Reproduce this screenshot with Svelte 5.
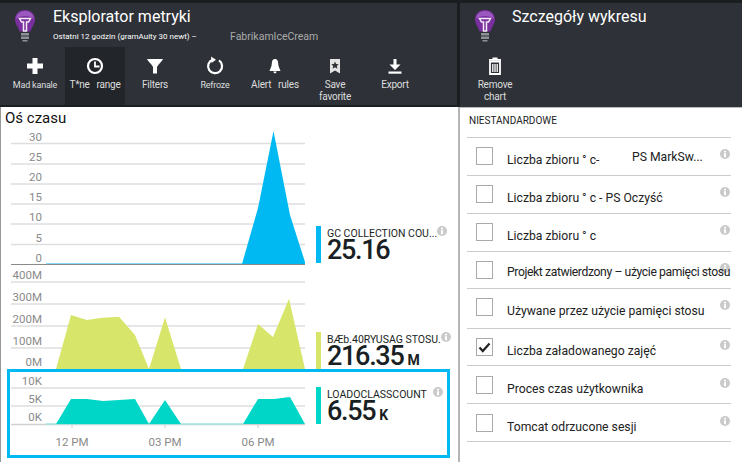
<script>
	const tools = [
		{ id: 'plus', label: 'Mad kanale', tight: true },
		{ id: 'clock', label: 'T*ne   range', active: true },
		{ id: 'filter', label: 'Filters' },
		{ id: 'refresh', label: 'Refroze', tight: true },
		{ id: 'bell', label: 'Alert   rules' },
		{ id: 'bookmark', label: 'Save\nfavorite' },
		{ id: 'export', label: 'Export' }
	];

	const charts = [
		{
			height: 135,
			bottom: 2,
			color: '#00b9f2',
			grid: [{ y: 13.500, t: '30' }, { y: 34, t: '25' }, { y: 54, t: '20' }, { y: 74, t: '15' }, { y: 94, t: '10' }, { y: 114.500, t: '5' }],
			zero: { y: 135, t: '0' },
			points: '242,134 258,78 273.5,1 290,85 305,132 305,134',
			thin: [46, 242, 134],
			name: 'GC COLLECTION COU...',
			value: '25.16',
			unit: ''
		},
		{
			height: 104,
			bottom: 0,
			color: '#d7e66b',
			grid: [{ y: 17, t: '400M' }, { y: 39, t: '300M' }, { y: 61, t: '200M' }, { y: 83, t: '100M' }],
			zero: { y: 104, t: '0M' },
			points: '56,104 71,50 87,55 100,53 119,51.7 135,70 149,104 165,52.3 181,104 243,104 258,59 273,72 289,33.7 305,104',
			name: 'BÆb.40RYUSAG STOSU.',
			value: '216.35',
			unit: 'M'
		}
	];

	const rows = [
		{ a: 'Liczba zbioru ° c-', b: 'PS MarkSw...', h: 38, top: 9 },
		{ a: 'Liczba zbioru ° c - PS Oczyść', h: 38, top: 9 },
		{ a: 'Liczba zbioru ° c', h: 38, top: 9 },
		{ a: 'Projekt zatwierdzony – użycie pamięci stosu', h: 37, top: 9, narrow: true },
		{ a: 'Używane przez użycie pamięci stosu', h: 40, top: 9 },
		{ a: 'Liczba załadowanego zajęć', h: 37, top: 9, checked: true },
		{ a: 'Proces czas użytkownika', h: 38, top: 10 },
		{ a: 'Tomcat odrzucone sesji', h: 38, top: 10 }
	];
</script>

{#snippet bulb()}
	<svg class="bulb" width="22" height="32" viewBox="0 0 22 32">
		<path d="M11 0C5 0 1 4 1 9.500C1 14 4 16 5.500 21.500H16.500C18 16 21 14 21 9.500C21 4 17 0 11 0Z" fill="#7a2f9e" />
		<path d="M11 1C6 1 2.500 4 2 9C5 5 17 5 20 9C19.500 4 16 1 11 1Z" fill="#9b59c0" />
		<path d="M5.500 8.500H16.500L14.500 12H12.500V21H9.500V12H7.500Z" fill="none" stroke="#f2eaf6" stroke-width="1.500" />
		<rect x="7" y="23" width="8" height="2.500" fill="#8d9094" />
		<rect x="7" y="26.500" width="8" height="2.500" fill="#8d9094" />
		<rect x="8.500" y="30" width="5" height="1.500" fill="#8d9094" />
	</svg>
{/snippet}

{#snippet icon(id)}
	<svg width="20" height="20" viewBox="0 0 20 20">
		{#if id === 'plus'}
			<path d="M7.500 2h5v5.500h5.500v5h-5.500v5.500h-5v-5.500h-5.500v-5h5.500z" fill="#fff" />
		{:else if id === 'clock'}
			<circle cx="10" cy="10" r="7" fill="none" stroke="#fff" stroke-width="2.200" />
			<path d="M10 5.500V10.500H14.500" fill="none" stroke="#fff" stroke-width="1.800" />
		{:else if id === 'filter'}
			<path d="M2 3H18C17 6 13 8 12 11V17.500H8V11C7 8 3 6 2 3Z" fill="#fff" />
		{:else if id === 'refresh'}
			<path d="M7.500 3.700A7 7 0 1 0 14 4.400" fill="none" stroke="#fff" stroke-width="2.200" />
			<path d="M6 0.500L11 3.700L6.500 7Z" fill="#fff" />
		{:else if id === 'bell'}
			<path d="M10 3C12.200 3 13.200 5 13.200 7.500C13.200 11 15 13 15.500 15H4.500C5 13 6.800 11 6.800 7.500C6.800 5 7.800 3 10 3Z" fill="#fff" />
			<path d="M8.500 15.500H11.500C11.500 16.800 10.800 17.300 10 17.300S8.500 16.800 8.500 15.500Z" fill="#fff" />
		{:else if id === 'bookmark'}
			<path d="M5 3H15V17.500L10 14.500L5 17.500Z" fill="#e4e4e4" />
			<path d="M10 5.500L11.100 8L13.800 8.300L11.800 10L12.400 12.700L10 11.300L7.600 12.700L8.200 10L6.200 8.300L8.900 8Z" fill="#2e3238" />
		{:else if id === 'export'}
			<path d="M8.500 3H11.500V8.500H15.500L10 14L4.500 8.500H8.500Z" fill="#fff" />
			<rect x="3.500" y="15.500" width="13" height="2.200" fill="#fff" />
		{:else if id === 'trash'}
			<path d="M5 5.500H15V18H5Z" fill="none" stroke="#fff" stroke-width="1.800" />
			<path d="M7.800 8V16M10 8V16M12.200 8V16" stroke="#fff" stroke-width="1.300" />
			<path d="M4 3H16V4.800H4ZM7.500 1.500H12.500V3H7.500Z" fill="#fff" />
		{/if}
	</svg>
{/snippet}

{#snippet info()}
	<svg class="info" width="10" height="10" viewBox="0 0 10 10">
		<circle cx="5" cy="5" r="5" fill="#cacaca" />
		<rect x="4" y="4.200" width="2" height="4" fill="#fff" />
		<rect x="4" y="1.800" width="2" height="1.600" fill="#fff" />
	</svg>
{/snippet}

{#snippet legend(color, name, value, unit, bottom)}
	<div class="legend" style="margin-bottom:{bottom}px">
		<span class="swatch" style="background:{color}"></span>
		<div class="legend-text">
			<div class="legend-name"><span>{name}</span>{@render info()}</div>
			<div class="legend-value">{value}{#if unit}<small>{unit}</small>{/if}</div>
		</div>
	</div>
{/snippet}

<div class="page">
	<section class="blade left">
		<header>
			<div class="head">
				{@render bulb()}
				<div class="titles">
					<h1>Eksplorator metryki</h1>
					<p><span class="range">Ostatni 12 godzin (gramAuity 30 newt) –</span><span class="app">FabrikamIceCream</span></p>
				</div>
			</div>
			<div class="toolbar">
				{#each tools as t}
					<div class="tool" class:active={t.active} class:tight={t.tight}>
						{@render icon(t.id)}
						<span>{t.label}</span>
					</div>
				{/each}
			</div>
		</header>
		<div class="body">
			<div class="timeline">Oś czasu</div>
			{#each charts as c}
				<div class="chart-row">
					<svg width="305" height={c.height} viewBox="0 0 305 {c.height}">
						{#each c.grid as g}
							<line x1="11" x2="305" y1={g.y} y2={g.y} stroke="#dedede" stroke-width="1.400" />
							<text x="42" y={g.y - 3} text-anchor="end">{g.t}</text>
						{/each}
						<text x="42" y={c.zero.y - 3} text-anchor="end">{c.zero.t}</text>
						<polygon points={c.points} fill={c.color} />
						{#if c.thin}
							<line x1={c.thin[0]} x2={c.thin[1]} y1={c.thin[2]} y2={c.thin[2]} stroke={c.color} stroke-width="1" />
							<line x1="11" x2="305" y1={c.height - 0.500} y2={c.height - 0.500} stroke="#8a8a8a" stroke-width="1" />
						{/if}
					</svg>
					{@render legend(c.color, c.name, c.value, c.unit, c.bottom)}
				</div>
			{/each}
			<div class="chart-row selected">
				<svg width="295" height="83" viewBox="10 0 295 83">
					<line x1="11" x2="305" y1="16" y2="16" stroke="#dedede" stroke-width="1.400" />
					<line x1="11" x2="305" y1="34" y2="34" stroke="#dedede" stroke-width="1.400" />
					<line x1="11" x2="305" y1="52.500" y2="52.500" stroke="#d0d0d0" stroke-width="1.400" />
					<text x="42" y="13" text-anchor="end">10K</text>
					<text x="42" y="31" text-anchor="end">5K</text>
					<text x="42" y="49" text-anchor="end">0K</text>
					<line x1="46" x2="243" y1="52" y2="52" stroke="#9fe8e2" stroke-width="1.500" />
					<polygon points="56,52 71,27 87,27 103,29 119,28 135,27 149,52 165,28 181,52 243,52 258,27 274,27 290,25 305,52" fill="#00d6c8" />
					<line x1="72" x2="72" y1="53" y2="56" stroke="#ccc" />
					<line x1="165" x2="165" y1="53" y2="56" stroke="#ccc" />
					<line x1="258" x2="258" y1="53" y2="56" stroke="#ccc" />
					<text x="72" y="74" text-anchor="middle">12 PM</text>
					<text x="165" y="74" text-anchor="middle">03 PM</text>
					<text x="258" y="74" text-anchor="middle">06 PM</text>
				</svg>
				<div class="legend-slot">
					{@render legend('#00d6c8', 'LOADOCLASSCOUNT', '6.55', 'K', 0)}
				</div>
			</div>
		</div>
	</section>
	<section class="blade right">
		<header>
			<div class="head">
				{@render bulb()}
				<div class="titles">
					<h1>Szczegóły wykresu</h1>
				</div>
			</div>
			<div class="toolbar">
				<div class="tool">
					{@render icon('trash')}
					<span>{'Remove\nchart'}</span>
				</div>
			</div>
		</header>
		<div class="body list">
			<div class="group">NIESTANDARDOWE</div>
			{#each rows as r}
				<div class="row" style="height:{r.h}px;padding-top:{r.top}px">
					<span class="check">
						{#if r.checked}
							<svg width="13" height="11" viewBox="0 0 13 11"><path d="M1.500 5.500L4.800 9L11.500 1.500" fill="none" stroke="#222" stroke-width="2.200" /></svg>
						{/if}
					</span>
					<span class="row-text" class:split={r.b} class:narrow={r.narrow}>{r.a}</span>
					{#if r.b}<span class="row-b">{r.b}</span>{/if}
					{@render info()}
				</div>
			{/each}
		</div>
	</section>
</div>

<style>
	:global(body) {
		margin: 0;
	}
	.page {
		width: 742px;
		height: 462px;
		display: flex;
		padding-top: 3px;
		box-sizing: border-box;
		background: #1b1e21;
		overflow: hidden;
		font-family: Roboto, 'Liberation Sans', sans-serif;
	}
	.blade {
		display: flex;
		flex-direction: column;
	}
	.left {
		width: 460px;
	}
	.right {
		width: 282px;
	}
	header {
		background: #2e3238;
		color: #fff;
		flex: none;
		display: flex;
		flex-direction: column;
	}
	.left header {
		height: 102px;
		margin: 0 3px 2px 0;
	}
	.right header {
		height: 104px;
	}
	.head {
		display: flex;
		height: 44px;
		flex: none;
	}
	.bulb {
		margin: 7px 0 0 14px;
	}
	.titles {
		margin-left: 17px;
	}
	.right .titles {
		margin-left: 16px;
	}
	h1 {
		margin: 1px 0 0;
		font-size: 16px;
		line-height: 25px;
		font-weight: 400;
	}
	p {
		margin: 0;
		display: flex;
		align-items: center;
		height: 14px;
		white-space: pre;
	}
	.range {
		width: 177px;
		font-size: 8px;
	}
	.app {
		color: #aaa;
		font-size: 10.500px;
	}
	.toolbar {
		display: flex;
		padding-left: 5px;
		flex: 1;
	}
	.tool {
		width: 60px;
		display: flex;
		flex-direction: column;
		align-items: center;
		padding-top: 9px;
		box-sizing: border-box;
		font-size: 10px;
		letter-spacing: -0.200px;
		line-height: 12px;
		text-align: center;
		gap: 3px;
		color: #ddd;
		white-space: pre;
	}
	.tool.active {
		background: #22252a;
	}
	.tool.tight {
		font-size: 9px;
	}
	.body {
		flex: 1;
		background: #fff;
		border-left: 1px solid #999;
		border-right: 2px solid #b5b5b5;
		box-sizing: border-box;
		min-height: 0;
	}
	.timeline {
		font-size: 15px;
		line-height: 23px;
		height: 23px;
		padding-left: 4px;
		color: #111;
	}
	.chart-row {
		display: flex;
		margin-left: -1px;
	}
	.chart-row text {
		font-size: 11.500px;
		fill: #8a8a8a;
	}
	.chart-row svg {
		flex: none;
		display: block;
	}
	.legend {
		display: flex;
		gap: 6px;
		align-self: flex-end;
		height: 37px;
		margin-left: 11px;
		flex: 1;
		min-width: 0;
	}
	.swatch {
		width: 5px;
		flex: none;
		height: 100%;
	}
	.legend-text {
		flex: 1;
		color: #1a1f24;
		min-width: 0;
	}
	.legend-name {
		display: flex;
		justify-content: space-between;
		font-size: 10.500px;
		line-height: 12px;
		height: 14px;
		box-sizing: border-box;
		padding: 2px 11px 0 0;
		white-space: nowrap;
	}
	.legend-name .info {
		margin-top: -2px;
		flex: none;
	}
	.legend-value {
		font-size: 27px;
		line-height: 20px;
		font-weight: 500;
		letter-spacing: -1.300px;
		white-space: nowrap;
	}
	.legend-value small {
		font-size: 14px;
		font-weight: 700;
		margin-left: 4px;
		letter-spacing: 0;
	}
	.selected {
		margin: 0 0 0 6px;
		width: 443px;
		height: 89px;
		box-sizing: border-box;
		border: 3px solid #00b9f2;
	}
	.selected .legend-name {
		padding-right: 4px;
	}
	.legend-slot {
		flex: 1;
		min-width: 0;
		padding-top: 15px;
	}
	.list {
		padding: 0 0 0 7px;
		border: 0;
		border-top: 1px solid #bbb;
	}
	.group {
		font-size: 10px;
		line-height: 12px;
		padding: 7px 0 0 2px;
		height: 30px;
		box-sizing: border-box;
		width: 264px;
		border-bottom: 1px solid #ccc;
		color: #222;
	}
	.row {
		width: 264px;
		box-sizing: border-box;
		border-bottom: 1px solid #ccc;
		display: flex;
		align-items: flex-start;
		padding: 9px 1px 0 9px;
		font-size: 12.200px;
		color: #222;
	}
	.check {
		width: 17px;
		height: 18px;
		border: 1px solid #aaa;
		box-sizing: border-box;
		flex: none;
		margin-right: 14px;
		display: flex;
		align-items: center;
		justify-content: center;
	}
	.row-text {
		padding-top: 6px;
		white-space: nowrap;
	}
	.row-text.split {
		width: 125px;
	}
	.row-text.narrow {
		width: 205px;
		padding-top: 4px;
		letter-spacing: -0.400px;
		position: relative;
		z-index: 1;
	}
	.row-b {
		padding-top: 3px;
		white-space: nowrap;
	}
	.row .info {
		margin-left: auto;
		margin-top: 2px;
		flex: none;
	}
</style>
